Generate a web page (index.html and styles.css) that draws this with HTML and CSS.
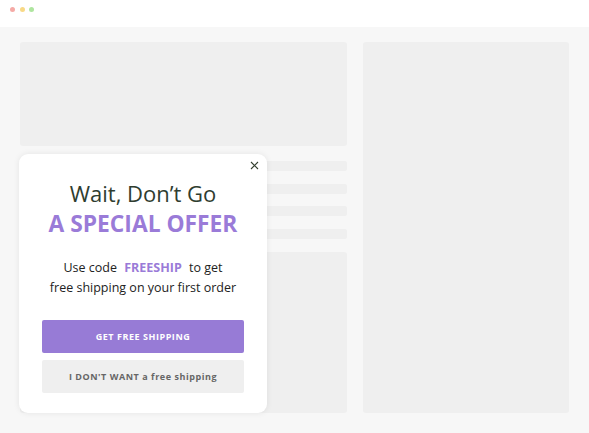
FILE: index.html
```html
<!DOCTYPE html>
<html>
<head>
<meta charset="utf-8">
<link rel="stylesheet" href="styles.css">
</head>
<body>
<div class="topbar">
  <span class="dot red"></span><span class="dot yellow"></span><span class="dot green"></span>
</div>
<div class="main">
  <div class="col-left">
    <div class="block-top"></div>
    <div class="lines">
      <div class="line"></div>
      <div class="line"></div>
      <div class="line"></div>
      <div class="line"></div>
    </div>
    <div class="block-bottom"></div>
  </div>
  <div class="col-right"></div>
</div>
<div class="popup">
  <button class="close" aria-label="Close">
    <svg width="9" height="9" viewBox="0 0 9 9"><path d="M1 1L8 8M8 1L1 8" stroke="#34402f" stroke-width="1.1" fill="none"/></svg>
  </button>
  <h1 class="title">Wait, Don’t Go</h1>
  <h2 class="offer">A SPECIAL OFFER</h2>
  <p class="desc">Use code <span class="code">FREESHIP</span> to get<br>free shipping on your first order</p>
  <div class="actions">
    <button class="btn primary">GET FREE SHIPPING</button>
    <button class="btn secondary">I DON'T WANT a free shipping</button>
  </div>
</div>
</body>
</html>
```
FILE: styles.css
```css
* { box-sizing: border-box; }
html, body { margin: 0; padding: 0; }
body {
  background: #f7f7f7;
  font-family: "Open Sans", "Noto Sans", sans-serif;
  width: 589px;
  height: 433px;
  overflow: hidden;
  position: relative;
}
.topbar {
  height: 27px;
  background: #ffffff;
  display: flex;
  align-items: center;
  gap: 4.5px;
  padding: 0 0 8px 10px;
}
.dot {
  width: 5px;
  height: 5px;
  border-radius: 50%;
  display: block;
}
.dot.red { background: #f5aaa6; }
.dot.yellow { background: #f8d986; }
.dot.green { background: #aee59f; }
.main {
  display: grid;
  grid-template-columns: 327px 206px;
  column-gap: 16px;
  padding: 15px 20px 0 20px;
  height: 386px;
}
.col-left {
  display: flex;
  flex-direction: column;
  height: 371px;
}
.block-top {
  height: 104px;
  background: #efefef;
  border-radius: 3px;
}
.lines {
  display: flex;
  flex-direction: column;
  gap: 12.5px;
  margin-top: 15px;
}
.line {
  height: 10px;
  background: #efefef;
  border-radius: 2px;
}
.block-bottom {
  margin-top: 13.5px;
  flex: 1;
  background: #efefef;
  border-radius: 3px;
}
.col-right {
  height: 371px;
  background: #efefef;
  border-radius: 3px;
}
.popup {
  position: absolute;
  left: 19px;
  top: 154px;
  width: 248px;
  height: 259px;
  background: #ffffff;
  border-radius: 9px;
  box-shadow: 0 0 6px rgba(0,0,0,0.08);
  text-align: center;
  padding-top: 24px;
}
.close {
  position: absolute;
  right: 8px;
  top: 7px;
  width: 9px;
  height: 9px;
  padding: 0;
  border: 0;
  background: none;
  display: block;
}
.close svg { display: block; }
.title {
  margin: 0;
  font-weight: 400;
  font-size: 22px;
  line-height: 30px;
  color: #2f3d30;
}
.offer {
  margin: 1px 0 0 0;
  font-weight: 700;
  font-size: 22.8px;
  line-height: 30px;
  color: #9a7bd8;
}
.desc {
  margin: 19px 0 0 0;
  font-size: 12.5px;
  line-height: 20px;
  color: #222;
}
.code {
  color: #9a7bd8;
  font-weight: 700;
  padding: 0 4px;
}
.actions {
  display: flex;
  flex-direction: column;
  gap: 7px;
  padding: 0 23px;
  margin-top: 22px;
}
.btn {
  height: 33px;
  border: 0;
  border-radius: 2px;
  font-family: inherit;
  font-weight: 700;
  font-size: 9px;
  letter-spacing: 0.55px;
}
.btn.primary {
  background: #977bd6;
  color: #ffffff;
}
.btn.secondary {
  background: #efefef;
  color: #666666;
}
```
